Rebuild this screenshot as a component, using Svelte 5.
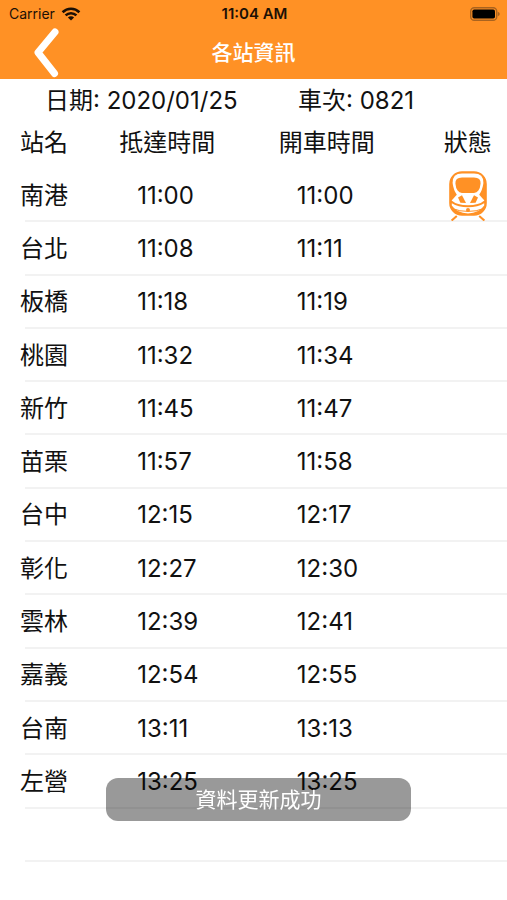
<script lang="ts">
	interface Stop {
		name: string;
		arrival: string;
		departure: string;
	}

	const date = '2020/01/25';
	const trainNo = '0821';

	const stops: Stop[] = [
		{ name: '南港', arrival: '11:00', departure: '11:00' },
		{ name: '台北', arrival: '11:08', departure: '11:11' },
		{ name: '板橋', arrival: '11:18', departure: '11:19' },
		{ name: '桃園', arrival: '11:32', departure: '11:34' },
		{ name: '新竹', arrival: '11:45', departure: '11:47' },
		{ name: '苗栗', arrival: '11:57', departure: '11:58' },
		{ name: '台中', arrival: '12:15', departure: '12:17' },
		{ name: '彰化', arrival: '12:27', departure: '12:30' },
		{ name: '雲林', arrival: '12:39', departure: '12:41' },
		{ name: '嘉義', arrival: '12:54', departure: '12:55' },
		{ name: '台南', arrival: '13:11', departure: '13:13' },
		{ name: '左營', arrival: '13:25', departure: '13:25' }
	];

	let current = $state(0);
</script>

<div class="screen" lang="zh-Hant">
	<header>
		<div class="status">
			<span class="carrier">
				Carrier
				<svg width="20" height="14" viewBox="0 0 20 14" aria-hidden="true">
					<g fill="none" stroke="#1c1005" stroke-width="2.6">
						<path d="M1.6 5.2a12 12 0 0 1 16.8 0" />
						<path d="M4.6 8.4a7.7 7.7 0 0 1 10.8 0" />
					</g>
					<path fill="#1c1005" d="M10 13.6 6.9 10.5a4.4 4.4 0 0 1 6.2 0z" />
				</svg>
			</span>
			<span class="clock">11:04 AM</span>
			<svg class="battery" width="30" height="14" viewBox="0 0 30 14" aria-hidden="true">
				<rect x="0.7" y="0.7" width="26" height="12.6" rx="3.6" fill="none" stroke="#a9631f" stroke-width="1.4" />
				<rect x="2.4" y="2.4" width="22.6" height="9.2" rx="1.8" fill="#000" />
				<path d="M27.8 4.8q2 .8 2 2.2t-2 2.2z" fill="#a9631f" />
			</svg>
		</div>
		<nav>
			<button class="back" aria-label="返回">
				<svg width="26" height="50" viewBox="0 0 26 50" aria-hidden="true">
					<path d="M22 4 5 24.5 21.5 45.5" fill="none" stroke="#fff" stroke-width="7" stroke-linecap="round" stroke-linejoin="round" />
				</svg>
			</button>
			<h1>各站資訊</h1>
		</nav>
	</header>

	<div class="info">
		<span>日期: {date}</span>
		<span>車次: {trainNo}</span>
	</div>

	<table>
		<thead>
			<tr>
				<th class="name">站名</th>
				<th class="arrival">抵達時間</th>
				<th class="departure">開車時間</th>
				<th class="state">狀態</th>
			</tr>
		</thead>
		<tbody>
			{#each stops as stop, i}
				<tr>
					<td class="name">{stop.name}</td>
					<td class="time">{stop.arrival}</td>
					<td class="time">{stop.departure}</td>
					<td class="state">
						{#if i === current}
							<svg width="40" height="50" viewBox="0 0 40 50" role="img" aria-label="列車位置">
								<!-- body -->
								<rect x="2" y="1" width="36" height="43" rx="12" fill="#ff9125" stroke="#ff9125" stroke-width="1.6" />
								<!-- windscreen -->
								<path d="M14 2.6H26Q35.6 2.6 35.4 12Q34.6 19 31 24H9Q5.4 19 4.6 12Q4.4 2.6 14 2.6z" fill="#fff" />
								<path d="M14 6.4H26Q33 6.4 32.6 12.4Q32.2 17 30.4 19.6Q28.8 22 26 22H14Q11.2 22 9.6 19.6Q7.8 17 7.4 12.4Q7 6.4 14 6.4z" fill="#ff9125" />
								<!-- nose and lamps -->
								<path d="M9 23.4H31L36.4 29.4Q31 34.2 20 34.2T3.6 29.4z" fill="#fff" />
								<path d="M10 26.4 14 24.2 18 32 12.4 31.8z" fill="#ff9125" />
								<path d="M30 26.4 26 24.2 22 32 27.6 31.8z" fill="#ff9125" />
								<!-- bumper -->
								<path d="M3.8 32.2Q10 36.2 20 36.2T36.2 32.2V34.6Q31 42.4 20 42.4T3.8 34.6z" fill="#fff" />
								<circle cx="20" cy="39" r="2" fill="#ff9125" />
								<path d="M5.4 37.8Q11 40.4 20 40.4T34.6 37.8" fill="none" stroke="#ff9125" stroke-width="1" />
								<path d="M8.8 45 3.6 49.6M31.2 45 36.4 49.6" fill="none" stroke="#ff9125" stroke-width="2" />
							</svg>
						{/if}
					</td>
				</tr>
			{/each}
			<tr>
				<td colspan="4"></td>
			</tr>
		</tbody>
	</table>

	<div class="toast" role="status">資料更新成功</div>
</div>

<style>
	:global(body) {
		margin: 0;
		background: #fff;
	}
	.screen {
		font-family: Inter, 'Noto Sans CJK TC', sans-serif;
		font-size: 24px;
		line-height: 32px;
		color: #111;
	}
	header {
		background: #ff9125;
	}
	.status {
		display: grid;
		grid-template-columns: 1fr auto 1fr;
		align-items: center;
		height: 27px;
		padding: 0 7px 0 9px;
		font-size: 14px;
		line-height: 20px;
		color: #1c1005;
	}
	.carrier {
		display: flex;
		align-items: center;
		gap: 6px;
	}
	.clock {
		font-size: 15px;
		font-weight: 600;
	}
	.battery {
		justify-self: end;
	}
	nav {
		display: grid;
		grid-template-columns: 1fr auto 1fr;
		align-items: center;
		height: 52px;
		padding: 0 33px;
	}
	.back {
		justify-self: start;
		display: flex;
		padding: 0;
		border: 0;
		background: none;
		cursor: pointer;
	}
	h1 {
		margin: 0;
		font-size: 21px;
		font-weight: 500;
		color: #fff;
	}
	.info {
		display: grid;
		grid-template-columns: 1fr 1fr;
		padding: 6px 0 4px 45px;
	}
	.info span:last-child {
		padding-left: 22px;
	}
	table {
		width: 100%;
		height: calc(100vh - 159px);
		border-collapse: collapse;
		table-layout: fixed;
	}
	th,
	td {
		padding: 0;
		font-weight: 400;
		text-align: left;
		vertical-align: middle;
	}
	th {
		height: 43px;
		padding-bottom: 5px;
	}
	td {
		height: 52px;
	}
	th.name {
		width: 23.5%;
	}
	th.arrival {
		width: 31.5%;
	}
	th.departure {
		width: 29.5%;
	}
	.name {
		padding-left: 20px;
		box-sizing: border-box;
	}
	.time {
		padding-left: 18px;
	}
	.state {
		text-align: center;
	}
	.state svg {
		display: block;
		margin: 0 auto;
	}
	tbody tr {
		background: linear-gradient(#f2f2f2, #f2f2f2) 25px 100% / 100% 2px no-repeat;
	}
	.toast {
		position: fixed;
		left: 21%;
		right: 19%;
		bottom: 79px;
		padding: 6px 0 5px;
		border-radius: 12px;
		background: rgba(0, 0, 0, 0.4);
		font-size: 21px;
		color: #fff;
		text-align: center;
	}
</style>
